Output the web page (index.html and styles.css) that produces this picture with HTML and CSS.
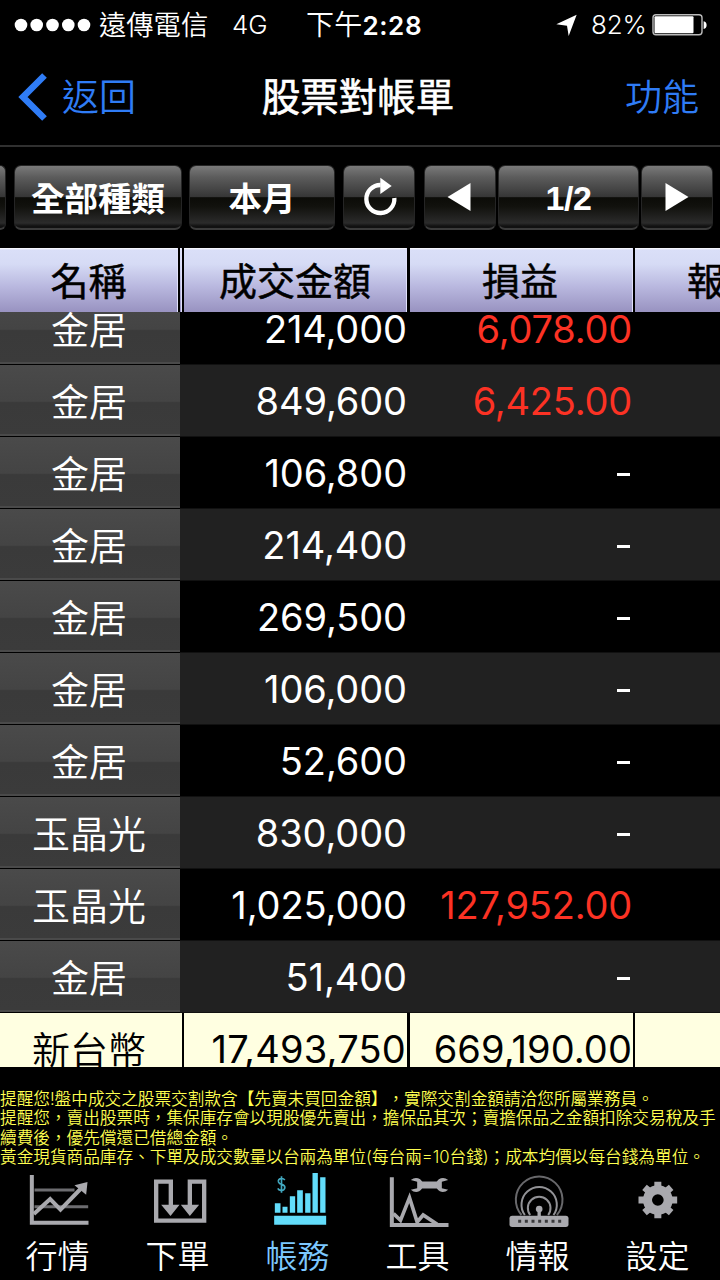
FILE: index.html
```html
<!DOCTYPE html>
<html lang="zh-Hant">
<head>
<meta charset="utf-8">
<title>股票對帳單</title>
<link rel="stylesheet" href="styles.css">
</head>
<body>
<div class="screen">
  <div class="status">
    <svg class="dots" width="78" height="14" viewBox="0 0 78 14" fill="#fff"><circle cx="7" cy="7" r="6.3"/><circle cx="22.7" cy="7" r="6.3"/><circle cx="38.5" cy="7" r="6.3"/><circle cx="54.3" cy="7" r="6.3"/><circle cx="70" cy="7" r="6.3"/></svg>
    <span class="carrier">遠傳電信</span>
    <span class="net">4G</span>
    <span class="time">下午<b>2:28</b></span>
    <svg class="loc" width="22" height="22" viewBox="0 0 66 66" fill="#fff"><path d="M1 31 62 2 38 66 33 35Z"/></svg>
    <span class="pct">82%</span>
    <svg class="batt" width="56" height="24" viewBox="0 0 56 24"><rect x="1" y="1.7" width="49" height="20" rx="3" fill="none" stroke="#bbb" stroke-width="1.4"/><rect x="2.5" y="3.3" width="39" height="17" rx="1" fill="#fff"/><path d="M51.6 8.2q3 .6 3 3.9t-3 3.900z" fill="#fff"/></svg>
  </div>
  <div class="nav">
    <a class="back"><svg width="30" height="48" viewBox="0 0 30 48"><path d="M27.500 2.500 6 24 27.500 45.500" fill="none" stroke="#2f7cf6" stroke-width="6.600"/></svg><span>返回</span></a>
    <h1>股票對帳單</h1>
    <a class="func">功能</a>
  </div>
  <div class="tools">
    <div class="btn b0"></div>
    <div class="btn b1">全部種類</div>
    <div class="btn b2">本月</div>
    <div class="btn b3"><svg width="40" height="44" viewBox="0 0 120 132"><path d="M62 39A42 42 0 1 0 103 78" fill="none" stroke="#fff" stroke-width="13"/><path d="M61 17v49l34-24z" fill="#fff"/></svg></div>
    <div class="btn b4"><svg width="24" height="28" viewBox="0 0 24 28"><path d="M.5 14 23.500 0v28z" fill="#fff"/></svg></div>
    <div class="btn b5">1/2</div>
    <div class="btn b6"><svg width="24" height="28" viewBox="0 0 24 28"><path d="M23.500 14 .5 0v28z" fill="#fff"/></svg></div>
  </div>
  <div class="head"><div>名稱</div><i></i><div>成交金額</div><div class="wide">損益</div><div class="cut">報酬率</div></div>
  <div class="rows">
    <div class="list">
      <div class="row"><div class="name">金居</div><div class="amt">214,000</div><div class="pl up">6,078.00</div></div>
      <div class="row"><div class="name">金居</div><div class="amt">849,600</div><div class="pl up">6,425.00</div></div>
      <div class="row"><div class="name">金居</div><div class="amt">106,800</div><div class="pl"><u></u></div></div>
      <div class="row"><div class="name">金居</div><div class="amt">214,400</div><div class="pl"><u></u></div></div>
      <div class="row"><div class="name">金居</div><div class="amt">269,500</div><div class="pl"><u></u></div></div>
      <div class="row"><div class="name">金居</div><div class="amt">106,000</div><div class="pl"><u></u></div></div>
      <div class="row"><div class="name">金居</div><div class="amt">52,600</div><div class="pl"><u></u></div></div>
      <div class="row"><div class="name">玉晶光</div><div class="amt">830,000</div><div class="pl"><u></u></div></div>
      <div class="row"><div class="name">玉晶光</div><div class="amt">1,025,000</div><div class="pl up">127,952.00</div></div>
      <div class="row"><div class="name">金居</div><div class="amt">51,400</div><div class="pl"><u></u></div></div>
      <div class="sum"><div class="sname">新台幣</div><div class="amt">17,493,750</div><div class="pl">669,190.00</div><div></div></div>
    </div>
  </div>
  <div class="notes">
    <p>提醒您!盤中成交之股票交割款含【先賣未買回金額】，實際交割金額請洽您所屬業務員。</p>
    <p>提醒您，賣出股票時，集保庫存會以現股優先賣出，擔保品其次；賣擔保品之金額扣除交易稅及手</p>
    <p>續費後，優先償還已借總金額。</p>
    <p>黃金現貨商品庫存、下單及成交數量以台兩為單位(每台兩=10台錢)；成本均價以每台錢為單位。</p>
  </div>
  <div class="tabs">
    <div class="tab"><svg width="120" height="62" viewBox="-7.500 9 360 186"><g fill="none" stroke="#a9a9ae"><path d="M102 75H222M102 125H263" stroke="#6c6c70" stroke-width="9"/><path d="M94 30V173H264" stroke-width="12"/><path d="M100 147 149 102 180 134 240 72" stroke-width="12"/></g><path d="M222 61 261 51 257 89Z" fill="#a9a9ae"/></svg><span>行情</span></div>
    <div class="tab"><svg width="120" height="62" viewBox="352.500 9 360 186"><path d="M511 124V50H467V167H611V50H568V124" fill="none" stroke="#a9a9ae" stroke-width="13"/><path d="M482 119H537L510 153ZM541 119H596L568 153Z" fill="#a9a9ae"/></svg><span>下單</span></div>
    <div class="tab on"><svg width="120" height="62" viewBox="-7.500 9 360 186" fill="#62dcfa"><path d="M101 152H257V179H101ZM103 115h17v28h-17zM126 125h15v18h-15zM148 94h16v49h-16zM170 76h17v67h-17zM194 85h16v58h-16zM216 24h16v119h-16zM239 37h16v106h-16z"/><path d="M133 45Q128 39 121 41 112 43 114 51 116 57 124 58 134 61 133 69 130 78 121 76 114 75 112 70M123 34V83" fill="none" stroke="#42a8c0" stroke-width="5"/></svg><span>帳務</span></div>
    <div class="tab"><svg width="120" height="62" viewBox="352.500 9 360 186"><g fill="none" stroke="#a9a9ae"><path d="M454 37V180H624" stroke-width="12"/><path d="M459 146 480 166 507 98 530 171 548 150 590 178" stroke-width="11"/><path d="M536 60H598" stroke-width="21"/></g><path d="M511 45Q525 34 539 43 549 51 546 61 548 72 536 79 522 84 511 74L530 70V50ZM623 45Q609 34 595 43 585 51 588 61 586 72 598 79 612 84 623 74L604 70V50Z" fill="#a9a9ae"/></svg><span>工具</span></div>
    <div class="tab"><svg width="120" height="62" viewBox="-7.500 9 360 186"><g fill="none" stroke="#929296" stroke-width="6"><path d="M123 150A70 70 0 1 1 229 150" stroke="#68686b"/><path d="M133 150A53 53 0 1 1 219 150"/><path d="M149 150A34 34 0 1 1 203 150"/></g><path d="M171 135h10v22h-10z" fill="#a9a9ae"/><circle cx="176" cy="132" r="10" fill="#a9a9ae"/><rect x="87" y="152" width="177" height="34" rx="8" fill="#a9a9ae"/><path d="M113 169H244" stroke="#3a3a3c" stroke-width="9" stroke-dasharray="9 11"/></svg><span>情報</span></div>
    <div class="tab"><svg width="120" height="62" viewBox="352.500 9 360 186"><g transform="translate(532 105)" fill="none" stroke="#a9a9ae"><circle r="31" stroke-width="27"/><path d="M0-38V-55M0 38V55M-38 0H-58M38 0H58M27-27 40-38M-27-27-40-38M27 27 40 38M-27 27-40 38" stroke-width="21"/></g></svg><span>設定</span></div>
  </div>
</div>
</body>
</html>
```
FILE: styles.css
```css
* { box-sizing: border-box; }
body { margin: 0; background: #000; color: #fff; font-family: Inter, "Noto Sans CJK TC", sans-serif; }
p, h1 { margin: 0; }
svg { display: block; flex: none; }
.screen { width: 720px; height: 1280px; overflow: hidden; display: flex; flex-direction: column; }
.status { height: 50px; display: flex; align-items: center; font-size: 27px; line-height: 48px; padding-left: 14px; white-space: nowrap; font-weight: 350; flex: none; }
.carrier { margin-left: 7px; width: 133px; font-size: 27.300px; padding-top: 1px; }
.net { width: 74px; font-size: 26px; }
.time { width: 250px; font-size: 28px; letter-spacing: .2px; }
.time b { font-weight: 600; font-size: 26px; letter-spacing: .6px; }
.pct { margin-left: 13px; width: 61px; font-size: 26px; letter-spacing: -.2px; }
.nav { height: 97px; flex: none; border-bottom: 2px solid #303030; display: grid; grid-template-columns: 200px 1fr 200px; align-items: center; padding: 0 21px 2px 17px; font-size: 37px; }
.back, .func { color: #2f7cf6; font-weight: 350; }
.back { display: flex; align-items: center; gap: 15px; }
.back span, .func { padding-bottom: 4px; }
.func { text-align: right; }
.nav h1 { padding-bottom: 6px; font-size: 38.500px; font-weight: 400; -webkit-text-stroke: .6px; text-align: center; white-space: nowrap; }
.tools { height: 101px; flex: none; display: flex; padding-top: 18px; }
.btn { height: 65px; flex: none; display: flex; align-items: center; justify-content: center; border-radius: 7px; border: 1px solid #252525; border-bottom: 2px solid #3b3b3b; font-weight: 700; font-size: 33.500px; background: linear-gradient(#7a7a7a 0, #5c5c5c 18%, #363636 50%, #0c0c08 51%, #11110d 65%, #2b2b2b 92%, #111 97%); white-space: nowrap; }
.b0 { width: 6px; border-left: 0; border-radius: 0 7px 7px 0; }
.b1 { width: 168px; margin-left: 8px; padding-bottom: 2px; }
.b2 { width: 146px; margin-left: 7px; padding-bottom: 2px; }
.b3 { width: 72px; margin-left: 8px; padding: 0 0 6px 2px; }
.b4 { width: 72px; margin-left: 9px; padding-right: 2px; }
.b5 { width: 141px; margin-left: 2px; font-family: "Liberation Sans", sans-serif; font-size: 34px; letter-spacing: -.4px; padding-top: 3px; }
.b6 { width: 72px; margin-left: 2px; }
.head { height: 64px; flex: none; display: flex; overflow: hidden; font-size: 38px; font-weight: 400; -webkit-text-stroke: .5px; color: #000; text-align: center; line-height: 66px; }
.head > * { flex: none; width: 223px; margin-right: 3px; background: linear-gradient(#fff 0, #dadff8 3%, #d6dbf5 25%, #b9b8df 60%, #9a94c2 98%); border-right: 1px solid #e0e0fa; white-space: nowrap; overflow: hidden; }
.head > :first-child { width: 178px; margin-right: 2px; }
.head > i { width: 2px; margin-right: 2px; }
.head > .wide { margin-right: 2px; padding-right: 2px; }
.head > .cut { width: 85px; margin: 0; border: 0; text-align: left; padding-left: 52px; }
.rows { height: 755px; flex: none; overflow: hidden; display: flex; flex-direction: column; justify-content: flex-end; }
.list { margin-bottom: -19px; flex: none; }
.row { height: 72px; display: flex; font-size: 38px; line-height: 72px; border-bottom: 1px solid #111; }
.row:nth-child(even) { background: #212121; }
.name { width: 180px; text-align: center; padding-right: 2px; line-height: 75px; font-weight: 350; background: linear-gradient(#4a4a4a 0, #444 51%, #3a3a3a 53%, #3b3b3b 97%, #4a4a4a 97.500%); border-bottom: 1px solid #000; height: 72px; }
.amt, .pl { font-weight: 400; text-align: right; letter-spacing: -.1px; }
.amt { width: 228px; padding-right: 1px; }
.pl { width: 225px; letter-spacing: -.2px; padding-right: 1px; }
.up { color: #fc3224; }
.pl u { display: inline-block; width: 13px; height: 3px; background: #fff; margin: 0 2px 11px 0; }
.sum { height: 73px; display: flex; gap: 2px; font-size: 38px; line-height: 72px; color: #000; background: #000; }
.sum > div { background: #ffffe1; flex: none; }
.sum .sname { width: 182px; text-align: center; padding-right: 4px; font-weight: 350; line-height: 74px; }
.sum .amt { width: 223px; margin-right: 1px; letter-spacing: .2px; }
.sum .pl { width: 223px; letter-spacing: .1px; }
.sum > :last-child { width: 90px; }
.notes { height: 101px; flex: none; padding-top: 22.500px; font-size: 16.650px; line-height: 19.600px; color: #ffff50; white-space: nowrap; font-weight: 350; text-spacing-trim: space-all; }
.tabs { height: 112px; flex: none; display: flex; margin-left: -2.500px; }
.tab { width: 120px; flex: none; text-align: center; font-size: 32px; font-weight: 350; line-height: 54px; }
.on { color: #7cc8ff; }
```
